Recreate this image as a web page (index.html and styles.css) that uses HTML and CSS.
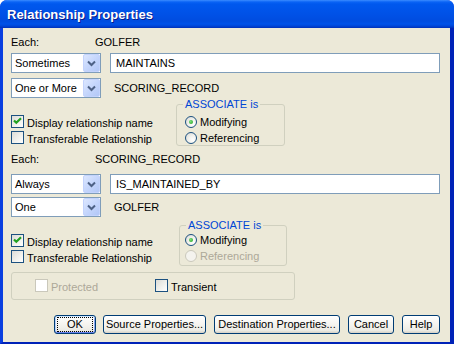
FILE: index.html
```html
<!DOCTYPE html>
<html>
<head>
<meta charset="utf-8">
<link rel="stylesheet" href="styles.css">
</head>
<body>
<div class="window">
  <div class="titlebar"><span class="title">Relationship Properties</span></div>
  <div class="frame">
    <div class="client">
      <div class="each each1"><span class="each-lbl">Each:</span><span>GOLFER</span></div>
      <div class="crow crow1">
        <div class="combo"><span class="combo-text">Sometimes</span><span class="combo-btn"><svg width="17" height="18" viewBox="0 0 17 18"><path d="M5 7.5 L8.5 11 L12 7.5" fill="none" stroke="#4D6185" stroke-width="2"/></svg></span></div>
        <div class="field">MAINTAINS</div>
      </div>
      <div class="crow crow2">
        <div class="combo"><span class="combo-text">One or More</span><span class="combo-btn"><svg width="17" height="18" viewBox="0 0 17 18"><path d="M5 7.5 L8.5 11 L12 7.5" fill="none" stroke="#4D6185" stroke-width="2"/></svg></span></div>
        <span class="entity">SCORING_RECORD</span>
      </div>
      <div class="mid mid1">
        <div class="checks">
          <div class="chk"><span class="box"><svg width="11" height="11" viewBox="0 0 11 11"><path d="M2 4.5 L4.3 6.8 L9 2.2" fill="none" stroke="#21A121" stroke-width="2.2"/></svg></span>Display relationship name</div>
          <div class="chk"><span class="box"></span>Transferable Relationship</div>
        </div>
        <div class="group group1">
          <span class="legend">ASSOCIATE is</span>
          <div class="radio"><span class="circle on"><span class="dot"></span></span>Modifying</div>
          <div class="radio"><span class="circle"></span>Referencing</div>
        </div>
      </div>
      <div class="each each2"><span class="each-lbl">Each:</span><span>SCORING_RECORD</span></div>
      <div class="crow crow3">
        <div class="combo"><span class="combo-text">Always</span><span class="combo-btn"><svg width="17" height="18" viewBox="0 0 17 18"><path d="M5 7.5 L8.5 11 L12 7.5" fill="none" stroke="#4D6185" stroke-width="2"/></svg></span></div>
        <div class="field">IS_MAINTAINED_BY</div>
      </div>
      <div class="crow crow4">
        <div class="combo"><span class="combo-text">One</span><span class="combo-btn"><svg width="17" height="18" viewBox="0 0 17 18"><path d="M5 7.5 L8.5 11 L12 7.5" fill="none" stroke="#4D6185" stroke-width="2"/></svg></span></div>
        <span class="entity">GOLFER</span>
      </div>
      <div class="mid mid2">
        <div class="checks">
          <div class="chk"><span class="box"><svg width="11" height="11" viewBox="0 0 11 11"><path d="M2 4.5 L4.3 6.8 L9 2.2" fill="none" stroke="#21A121" stroke-width="2.2"/></svg></span>Display relationship name</div>
          <div class="chk"><span class="box"></span>Transferable Relationship</div>
        </div>
        <div class="group group2">
          <span class="legend">ASSOCIATE is</span>
          <div class="radio"><span class="circle on"><span class="dot"></span></span>Modifying</div>
          <div class="radio disabled"><span class="circle"></span>Referencing</div>
        </div>
      </div>
      <div class="bottom-group">
        <div class="chk disabled protected"><span class="box"></span>Protected</div>
        <div class="chk transient"><span class="box"></span>Transient</div>
      </div>
      <div class="buttons">
        <button class="btn default ok"><span class="focus">OK</span></button>
        <button class="btn src">Source Properties...</button>
        <button class="btn dst">Destination Properties...</button>
        <button class="btn cancel">Cancel</button>
        <button class="btn help">Help</button>
      </div>
    </div>
  </div>
</div>
</body>
</html>
```
FILE: styles.css
```css
html, body {
  margin: 0;
  padding: 0;
  background: #ffffff;
}
body {
  font-family: "Liberation Sans", Arial, sans-serif;
  font-size: 11px;
  color: #000;
}
.window {
  width: 454px;
  height: 344px;
  display: flex;
  flex-direction: column;
  border-radius: 7px 7px 0 0;
  overflow: hidden;
  background: #0831D9;
}
.titlebar {
  height: 28px;
  flex: none;
  background: linear-gradient(to bottom, #3B8CFF 0px, #0A63F5 2px, #0058EE 4px, #0054EA 10px, #0050E5 16px, #004CDF 21px, #0052E8 24px, #0046D8 26px, #0030B8 28px);
  display: flex;
  align-items: center;
  padding-left: 7px;
  box-sizing: border-box;
}
.title {
  color: #fff;
  font-family: "Liberation Sans", Arial, sans-serif;
  font-weight: bold;
  font-size: 13px;
  text-shadow: 1px 1px 0 #0A1C8A;
  margin-top: 1px;
}
.frame {
  flex: 1;
  display: flex;
  border-left: 3px solid #0A3FE0;
  border-right: 4px solid #0022B8;
  border-bottom: 2px solid #0022B8;
}
.client {
  flex: 1;
  background: #ECE9D8;
  padding: 0 10px 0 8px;
  display: flex;
  flex-direction: column;
}
.each {
  display: flex;
  height: 14px;
  line-height: 14px;
}
.each-lbl {
  width: 84px;
  flex: none;
}
.each1 { margin-top: 7px; }
.each2 { margin-top: 5px; }
.crow {
  display: flex;
  align-items: center;
  height: 20px;
}
.crow1 { margin-top: 4px; }
.crow2 { margin-top: 5px; }
.crow3 { margin-top: 8px; }
.crow4 { margin-top: 3px; }
.combo {
  width: 90px;
  height: 20px;
  box-sizing: border-box;
  border: 1px solid #7F9DB9;
  background: #fff;
  display: flex;
  align-items: center;
  flex: none;
}
.combo-text {
  flex: 1;
  padding-left: 3px;
}
.combo-btn {
  width: 17px;
  height: 18px;
  box-sizing: border-box;
  border: 1px solid #C3D3FD;
  border-radius: 2px;
  background: linear-gradient(to bottom right, #DCE7FF 0%, #C5D6FC 50%, #B2C7F6 100%);
  display: flex;
  align-items: center;
  justify-content: center;
}
.combo-btn svg {
  display: block;
  margin: -1px;
}
.field {
  flex: 1;
  margin-left: 9px;
  height: 20px;
  box-sizing: border-box;
  border: 1px solid #7F9DB9;
  background: #fff;
  padding-left: 5px;
  line-height: 18px;
}
.entity {
  margin-left: 13px;
}
.mid {
  display: flex;
}
.mid1 { margin-top: 6px; }
.mid2 { margin-top: 8px; }
.checks {
  width: 165px;
  flex: none;
  padding-top: 11px;
}
.mid2 .checks { padding-top: 9px; width: 168px; }
.chk {
  display: flex;
  align-items: center;
  height: 16px;
  white-space: nowrap;
}
.box {
  width: 13px;
  height: 13px;
  box-sizing: border-box;
  border: 1px solid #1C5180;
  background: linear-gradient(to bottom right, #DCDCD7 0%, #F2F2EE 60%, #FFFFFF 100%);
  margin-right: 3px;
  flex: none;
  margin-top: -3px;
}
.box svg { display: block; }
.chk.disabled { color: #ACA899; }
.chk.disabled .box {
  border-color: #CAC8BB;
  background: #fff;
}
.group {
  position: relative;
  border: 1px solid #D0D0BF;
  border-radius: 3px;
  box-sizing: border-box;
}
.group1 {
  width: 109px;
  height: 42px;
  padding: 11px 0 0 8px;
}
.group2 {
  width: 108px;
  height: 41px;
  padding: 8px 0 0 5px;
}
.legend {
  position: absolute;
  top: -7px;
  left: 6px;
  padding: 0 2px;
  background: #ECE9D8;
  color: #0046D5;
  line-height: 13px;
}
.group2 .legend { left: 6px; }
.radio {
  display: flex;
  align-items: flex-start;
  height: 16px;
  line-height: 12px;
  white-space: nowrap;
}
.circle {
  width: 12px;
  height: 12px;
  box-sizing: border-box;
  border: 1px solid #1C5180;
  border-radius: 50%;
  background: radial-gradient(circle at 70% 70%, #FFFFFF 0%, #F3F3EF 40%, #D8D8D2 100%);
  margin-right: 3px;
  flex: none;
  display: flex;
  align-items: center;
  justify-content: center;
}
.dot {
  width: 4px;
  height: 4px;
  border-radius: 50%;
  background: radial-gradient(circle at 40% 40%, #7BE27B 0%, #21A121 90%);
}
.radio.disabled { color: #ACA899; }
.radio.disabled .circle {
  border-color: #CAC8BB;
  background: #F4F3EE;
}
.bottom-group {
  margin-top: 6px;
  width: 284px;
  height: 28px;
  box-sizing: border-box;
  border: 1px solid #D0D0BF;
  border-radius: 3px;
  display: flex;
  align-items: center;
  padding-left: 23px;
  padding-top: 2px;
}
.protected { width: 120px; }
.buttons {
  margin-top: 15px;
  display: flex;
  justify-content: flex-end;
  gap: 8px;
}
.btn {
  height: 19px;
  box-sizing: border-box;
  border: 1px solid #003C74;
  border-radius: 3px;
  background: linear-gradient(to bottom, #FFFFFF 0%, #F5F4EF 50%, #ECEBE4 85%, #D6D0C5 100%);
  font-family: "Liberation Sans", Arial, sans-serif;
  font-size: 11px;
  color: #000;
  padding: 0;
  margin: 0;
  display: flex;
  align-items: center;
  justify-content: center;
  line-height: 13px;
}
.btn.default {
  box-shadow: inset 0 1px 0 #CEE7FF, inset 0 -1px 0 #6982EE, inset 1px 0 0 #B8D0F9, inset -1px 0 0 #8AA6F1;
}
.focus {
  display: flex;
  align-items: center;
  justify-content: center;
  width: 34px;
  height: 13px;
  box-sizing: border-box;
  outline: 1px dotted #000;
}
.ok { width: 42px; margin-right: -1px; }
.src { width: 103px; }
.dst { width: 126px; }
.cancel { width: 46px; }
.help { width: 38px; }
```
